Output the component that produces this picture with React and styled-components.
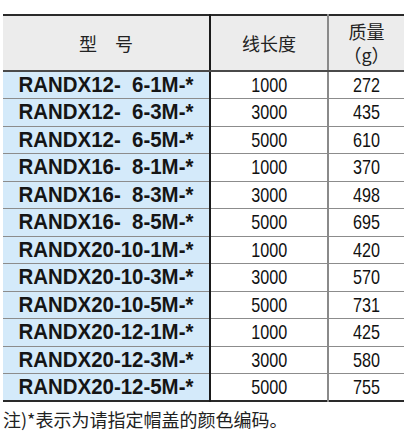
import React from "react";
import styled, { createGlobalStyle } from "styled-components";

const rows = [
  ["RANDX12-  6-1M-*", "1000", "272"],
  ["RANDX12-  6-3M-*", "3000", "435"],
  ["RANDX12-  6-5M-*", "5000", "610"],
  ["RANDX16-  8-1M-*", "1000", "370"],
  ["RANDX16-  8-3M-*", "3000", "498"],
  ["RANDX16-  8-5M-*", "5000", "695"],
  ["RANDX20-10-1M-*", "1000", "420"],
  ["RANDX20-10-3M-*", "3000", "570"],
  ["RANDX20-10-5M-*", "5000", "731"],
  ["RANDX20-12-1M-*", "1000", "425"],
  ["RANDX20-12-3M-*", "3000", "580"],
  ["RANDX20-12-5M-*", "5000", "755"],
];

function App() {
  return (
    <>
      <GlobalStyle />
      <Page>
        <Table>
          <colgroup>
            <col style={{ width: 207 }} />
            <col style={{ width: 118 }} />
            <col />
          </colgroup>
          <thead>
            <tr>
              <HeadCell $first>型　号</HeadCell>
              <HeadCell>线长度</HeadCell>
              <HeadCell $last>
                <HeadLine>质量</HeadLine>
                <HeadLine>（g）</HeadLine>
              </HeadCell>
            </tr>
          </thead>
          <tbody>
            {rows.map(([model, len, mass], i) => (
              <Row key={model} $lastRow={i === rows.length - 1}>
                <ModelCell>
                  <Model>{model}</Model>
                </ModelCell>
                <NumCell>
                  <Num>{len}</Num>
                </NumCell>
                <NumCell $last>
                  <Num>{mass}</Num>
                </NumCell>
              </Row>
            ))}
          </tbody>
        </Table>
        <Note>注)*表示为请指定帽盖的颜色编码。</Note>
      </Page>
    </>
  );
}

const GlobalStyle = createGlobalStyle`
  body {
    margin: 0;
    background: #fff;
    font-family: "Liberation Sans", "Noto Sans CJK SC", sans-serif;
    color: #151515;
  }
`;

const Page = styled.div`
  width: 416px;
  height: 438px;
  padding: 14px 12px 0 3px;
  box-sizing: border-box;
`;

const Table = styled.table`
  width: 401px;
  border-collapse: collapse;
  table-layout: fixed;
  border-top: 2px solid #2a2a2a;
  border-bottom: 2px solid #2a2a2a;
`;

const HeadCell = styled.th`
  height: 54px;
  padding: 0;
  background: #ececec;
  font-weight: normal;
  font-size: 18px;
  line-height: 23px;
  font-family: "Noto Sans CJK SC", sans-serif;
  color: #222;
  text-align: center;
  vertical-align: middle;
  border-bottom: 2px solid #4a4a4a;
  border-right: ${(p) =>
    p.$last ? "none" : p.$first ? "2px solid #1a1a1a" : "2px solid #8a8a8a"};
`;

const HeadLine = styled.div`
  line-height: 23px;
  white-space: nowrap;
`;

const Row = styled.tr`
  height: 27.5px;
  & > td {
    border-bottom: ${(p) => (p.$lastRow ? "none" : "1.5px solid #8c8c8c")};
  }
`;

const ModelCell = styled.td`
  padding: 0;
  height: 26px;
  background: #d4eafa;
  border-right: 2px solid #1a1a1a;
  text-align: center;
  font-size: 16px;
  line-height: 24px;
`;

const Model = styled.span`
  display: inline-block;
  vertical-align: top;
  line-height: 24px;
  font-family: "Liberation Sans", Arial, sans-serif;
  font-weight: bold;
  font-size: 21.5px;
  white-space: pre;
  transform: scaleX(0.95);
`;

const NumCell = styled.td`
  padding: 0;
  height: 26px;
  background: #fff;
  text-align: center;
  font-size: 16px;
  line-height: 24px;
  border-right: ${(p) => (p.$last ? "none" : "2px solid #8a8a8a")};
`;

const Num = styled.span`
  display: inline-block;
  vertical-align: top;
  line-height: 24px;
  font-family: "Liberation Sans", sans-serif;
  font-size: 21px;
  color: #111;
  transform: scaleX(0.77);
`;

const Note = styled.div`
  margin-top: 6px;
  font-family: "Noto Sans CJK SC", sans-serif;
  font-size: 18px;
  line-height: 22px;
  color: #222;
  white-space: nowrap;
`;

export default App;
